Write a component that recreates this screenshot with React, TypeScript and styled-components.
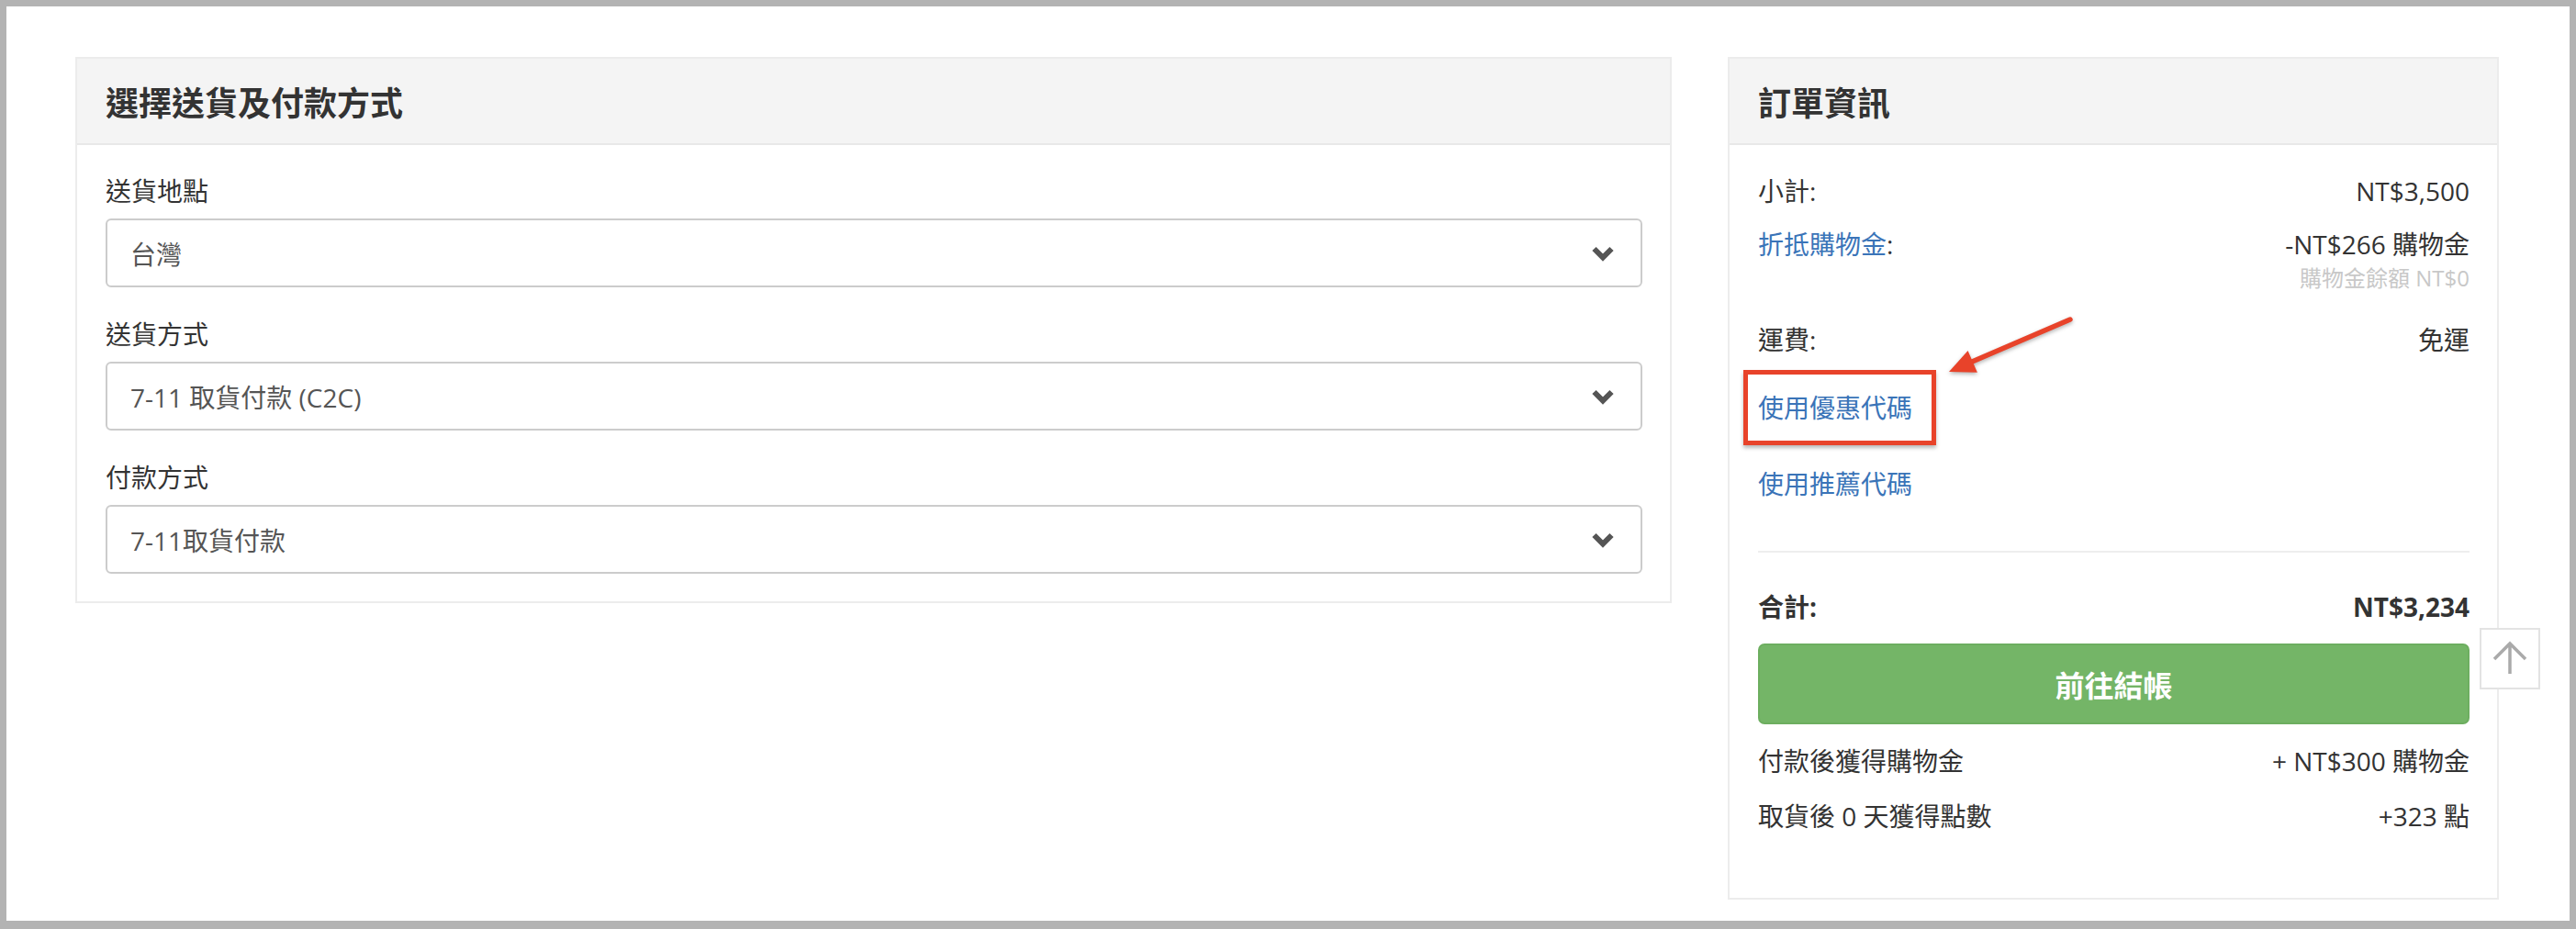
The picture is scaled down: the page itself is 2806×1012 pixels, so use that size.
import styled, { createGlobalStyle } from 'styled-components';

const GlobalStyle = createGlobalStyle`
  html, body {
    margin: 0;
    padding: 0;
    background: #b3b3b3;
  }
  body {
    font-family: "Open Sans", "Noto Sans CJK TC", sans-serif;
    color: #333;
  }
  * {
    box-sizing: border-box;
  }
`;

const Frame = styled.div`
  margin: 7px 7px 9px 7px;
  height: 996px;
  background: #fff;
  padding: 55px 0 0 75px;
  overflow: hidden;
`;

const Layout = styled.div`
  display: grid;
  grid-template-columns: 1739px 840px;
  column-gap: 61px;
  align-items: start;
`;

const Panel = styled.section`
  position: relative;
  border: 2px solid #ececec;
  background: #fff;
`;

const PanelHeader = styled.div`
  height: 94px;
  display: flex;
  align-items: center;
  padding: 0 31px;
  background: #f4f4f4;
  border-bottom: 2px solid #e8e8e8;
`;

const PanelTitle = styled.h3`
  margin: 0;
  font-size: 36px;
  font-weight: 700;
  color: #333;
`;

const PanelBody = styled.div<{ $bottom?: number }>`
  padding: 30px 30px ${(p) => p.$bottom ?? 30}px 31px;
`;

const Field = styled.div`
  & + & {
    margin-top: 31px;
  }
`;

const FieldLabel = styled.div`
  font-size: 28px;
  line-height: 40px;
  color: #333;
  margin-bottom: 10px;
`;

const SelectBox = styled.div`
  height: 75px;
  border: 2px solid #cccccc;
  border-radius: 6px;
  display: flex;
  align-items: center;
  justify-content: space-between;
  padding: 0 28px 0 25px;
  font-size: 28px;
  color: #555;
`;

const Row = styled.div<{ $mt?: number; $bold?: boolean }>`
  display: flex;
  justify-content: space-between;
  align-items: flex-start;
  margin-top: ${(p) => p.$mt ?? 0}px;
  font-size: 28px;
  line-height: 40px;
  font-weight: ${(p) => (p.$bold ? 700 : 400)};
  color: #333;
`;

const ValueCol = styled.div`
  display: flex;
  flex-direction: column;
  align-items: flex-end;
`;

const Note = styled.span`
  font-size: 24px;
  line-height: 34px;
  color: #c8c8c8;
`;

const Blue = styled.span`
  color: #3a74b8;
`;

const LinkLine = styled.div<{ $mt: number }>`
  position: relative;
  margin-top: ${(p) => p.$mt}px;
  font-size: 28px;
  line-height: 40px;
  color: #3a74b8;
`;

const Highlight = styled.div`
  position: absolute;
  left: -16px;
  top: -21px;
  width: 210px;
  height: 82px;
  border: 5px solid #e8432a;
  box-shadow: 0 3px 4px rgba(0, 0, 0, 0.28);
`;

const Pointer = styled.svg`
  position: absolute;
  left: 200px;
  top: -84px;
  filter: drop-shadow(0 2px 2px rgba(0, 0, 0, 0.3));
`;

const Divider = styled.hr<{ $mt: number }>`
  margin: ${(p) => p.$mt}px 0 0;
  border: none;
  border-top: 2px solid #eeeeee;
`;

const CheckoutButton = styled.button`
  display: block;
  width: 100%;
  height: 88px;
  margin-top: 20px;
  background: #74b567;
  border: 2px solid #6dae60;
  border-radius: 7px;
  color: #fff;
  font-family: inherit;
  font-size: 32px;
  font-weight: 700;
`;

const ScrollTop = styled.button`
  position: absolute;
  right: -47px;
  top: 620px;
  width: 66px;
  height: 67px;
  padding: 0;
  background: #fff;
  border: 2px solid #e3e3e3;
  display: flex;
  align-items: center;
  justify-content: center;
`;

function Chevron() {
  return (
    <svg width="26" height="18" viewBox="0 0 26 18">
      <polyline
        points="3.5,4 13,13.5 22.5,4"
        fill="none"
        stroke="#555"
        strokeWidth="6"
        strokeLinejoin="miter"
      />
    </svg>
  );
}

function SelectField({ label, value }: { label: string; value: string }) {
  return (
    <Field>
      <FieldLabel>{label}</FieldLabel>
      <SelectBox>
        <span>{value}</span>
        <Chevron />
      </SelectBox>
    </Field>
  );
}

export default function App() {
  return (
    <>
      <GlobalStyle />
      <Frame>
        <Layout>
          <Panel>
            <PanelHeader>
              <PanelTitle>選擇送貨及付款方式</PanelTitle>
            </PanelHeader>
            <PanelBody>
              <SelectField label="送貨地點" value="台灣" />
              <SelectField label="送貨方式" value="7-11 取貨付款 (C2C)" />
              <SelectField label="付款方式" value="7-11取貨付款" />
            </PanelBody>
          </Panel>

          <Panel>
            <PanelHeader>
              <PanelTitle>訂單資訊</PanelTitle>
            </PanelHeader>
            <PanelBody $bottom={69}>
              <Row>
                <span>小計:</span>
                <span>NT$3,500</span>
              </Row>
              <Row $mt={18}>
                <span>
                  <Blue>折抵購物金</Blue>:
                </span>
                <ValueCol>
                  <span>-NT$266 購物金</span>
                  <Note>購物金餘額 NT$0</Note>
                </ValueCol>
              </Row>
              <Row $mt={30}>
                <span>運費:</span>
                <span>免運</span>
              </Row>
              <LinkLine $mt={34}>
                使用優惠代碼
                <Highlight />
                <Pointer width="150" height="76" viewBox="0 0 150 76">
                  <line
                    x1="140"
                    y1="8"
                    x2="32"
                    y2="54.5"
                    stroke="#e8432a"
                    strokeWidth="5.5"
                    strokeLinecap="round"
                  />
                  <polygon points="8,65 38.9,65.8 28.6,42" fill="#e8432a" />
                </Pointer>
              </LinkLine>
              <LinkLine $mt={43}>使用推薦代碼</LinkLine>
              <Divider $mt={53} />
              <Row $mt={39} $bold>
                <span>合計:</span>
                <span>NT$3,234</span>
              </Row>
              <CheckoutButton type="button">前往結帳</CheckoutButton>
              <Row $mt={20}>
                <span>付款後獲得購物金</span>
                <span>+ NT$300 購物金</span>
              </Row>
              <Row $mt={20}>
                <span>取貨後 0 天獲得點數</span>
                <span>+323 點</span>
              </Row>
            </PanelBody>
            <ScrollTop type="button" aria-label="top">
              <svg width="40" height="40" viewBox="0 0 40 40">
                <path
                  d="M20 36 V4 M3 20 L20 3 L37 20"
                  fill="none"
                  stroke="#aaaaaa"
                  strokeWidth="3.5"
                />
              </svg>
            </ScrollTop>
          </Panel>
        </Layout>
      </Frame>
    </>
  );
}
